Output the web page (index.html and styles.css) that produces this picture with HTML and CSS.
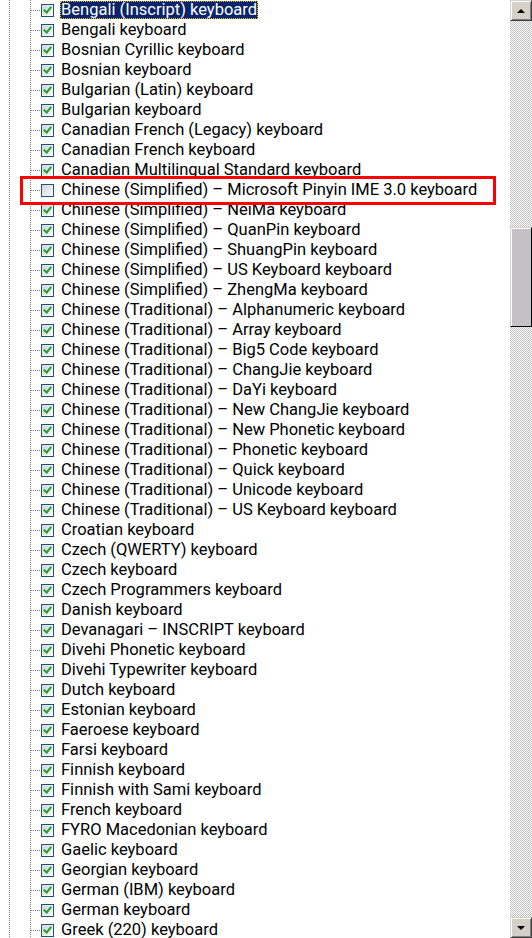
FILE: index.html
```html
<!DOCTYPE html>
<html>
<head>
<meta charset="utf-8">
<link rel="stylesheet" href="styles.css">
</head>
<body>
<div class="window">
  <div class="tree">
    <ul class="list">
      <li class="row"><span class="conn"></span><span class="cb on"></span><span class="label sel">Bengali (Inscript) keyboard</span></li>
      <li class="row"><span class="conn"></span><span class="cb on"></span><span class="label">Bengali keyboard</span></li>
      <li class="row"><span class="conn"></span><span class="cb on"></span><span class="label">Bosnian Cyrillic keyboard</span></li>
      <li class="row"><span class="conn"></span><span class="cb on"></span><span class="label">Bosnian keyboard</span></li>
      <li class="row"><span class="conn"></span><span class="cb on"></span><span class="label">Bulgarian (Latin) keyboard</span></li>
      <li class="row"><span class="conn"></span><span class="cb on"></span><span class="label">Bulgarian keyboard</span></li>
      <li class="row"><span class="conn"></span><span class="cb on"></span><span class="label">Canadian French (Legacy) keyboard</span></li>
      <li class="row"><span class="conn"></span><span class="cb on"></span><span class="label">Canadian French keyboard</span></li>
      <li class="row"><span class="conn"></span><span class="cb on"></span><span class="label">Canadian Multilingual Standard keyboard</span></li>
      <li class="row"><span class="conn"></span><span class="cb"></span><span class="label">Chinese (Simplified) – Microsoft Pinyin IME 3.0 keyboard</span></li>
      <li class="row"><span class="conn"></span><span class="cb on"></span><span class="label">Chinese (Simplified) – NeiMa keyboard</span></li>
      <li class="row"><span class="conn"></span><span class="cb on"></span><span class="label">Chinese (Simplified) – QuanPin keyboard</span></li>
      <li class="row"><span class="conn"></span><span class="cb on"></span><span class="label">Chinese (Simplified) – ShuangPin keyboard</span></li>
      <li class="row"><span class="conn"></span><span class="cb on"></span><span class="label">Chinese (Simplified) – US Keyboard keyboard</span></li>
      <li class="row"><span class="conn"></span><span class="cb on"></span><span class="label">Chinese (Simplified) – ZhengMa keyboard</span></li>
      <li class="row"><span class="conn"></span><span class="cb on"></span><span class="label">Chinese (Traditional) – Alphanumeric keyboard</span></li>
      <li class="row"><span class="conn"></span><span class="cb on"></span><span class="label">Chinese (Traditional) – Array keyboard</span></li>
      <li class="row"><span class="conn"></span><span class="cb on"></span><span class="label">Chinese (Traditional) – Big5 Code keyboard</span></li>
      <li class="row"><span class="conn"></span><span class="cb on"></span><span class="label">Chinese (Traditional) – ChangJie keyboard</span></li>
      <li class="row"><span class="conn"></span><span class="cb on"></span><span class="label">Chinese (Traditional) – DaYi keyboard</span></li>
      <li class="row"><span class="conn"></span><span class="cb on"></span><span class="label">Chinese (Traditional) – New ChangJie keyboard</span></li>
      <li class="row"><span class="conn"></span><span class="cb on"></span><span class="label">Chinese (Traditional) – New Phonetic keyboard</span></li>
      <li class="row"><span class="conn"></span><span class="cb on"></span><span class="label">Chinese (Traditional) – Phonetic keyboard</span></li>
      <li class="row"><span class="conn"></span><span class="cb on"></span><span class="label">Chinese (Traditional) – Quick keyboard</span></li>
      <li class="row"><span class="conn"></span><span class="cb on"></span><span class="label">Chinese (Traditional) – Unicode keyboard</span></li>
      <li class="row"><span class="conn"></span><span class="cb on"></span><span class="label">Chinese (Traditional) – US Keyboard keyboard</span></li>
      <li class="row"><span class="conn"></span><span class="cb on"></span><span class="label">Croatian keyboard</span></li>
      <li class="row"><span class="conn"></span><span class="cb on"></span><span class="label">Czech (QWERTY) keyboard</span></li>
      <li class="row"><span class="conn"></span><span class="cb on"></span><span class="label">Czech keyboard</span></li>
      <li class="row"><span class="conn"></span><span class="cb on"></span><span class="label">Czech Programmers keyboard</span></li>
      <li class="row"><span class="conn"></span><span class="cb on"></span><span class="label">Danish keyboard</span></li>
      <li class="row"><span class="conn"></span><span class="cb on"></span><span class="label">Devanagari – INSCRIPT keyboard</span></li>
      <li class="row"><span class="conn"></span><span class="cb on"></span><span class="label">Divehi Phonetic keyboard</span></li>
      <li class="row"><span class="conn"></span><span class="cb on"></span><span class="label">Divehi Typewriter keyboard</span></li>
      <li class="row"><span class="conn"></span><span class="cb on"></span><span class="label">Dutch keyboard</span></li>
      <li class="row"><span class="conn"></span><span class="cb on"></span><span class="label">Estonian keyboard</span></li>
      <li class="row"><span class="conn"></span><span class="cb on"></span><span class="label">Faeroese keyboard</span></li>
      <li class="row"><span class="conn"></span><span class="cb on"></span><span class="label">Farsi keyboard</span></li>
      <li class="row"><span class="conn"></span><span class="cb on"></span><span class="label">Finnish keyboard</span></li>
      <li class="row"><span class="conn"></span><span class="cb on"></span><span class="label">Finnish with Sami keyboard</span></li>
      <li class="row"><span class="conn"></span><span class="cb on"></span><span class="label">French keyboard</span></li>
      <li class="row"><span class="conn"></span><span class="cb on"></span><span class="label">FYRO Macedonian keyboard</span></li>
      <li class="row"><span class="conn"></span><span class="cb on"></span><span class="label">Gaelic keyboard</span></li>
      <li class="row"><span class="conn"></span><span class="cb on"></span><span class="label">Georgian keyboard</span></li>
      <li class="row"><span class="conn"></span><span class="cb on"></span><span class="label">German (IBM) keyboard</span></li>
      <li class="row"><span class="conn"></span><span class="cb on"></span><span class="label">German keyboard</span></li>
      <li class="row"><span class="conn"></span><span class="cb on"></span><span class="label">Greek (220) keyboard</span></li>
    </ul>
    <div class="highlight-box"></div>
  </div>
  <div class="scrollbar">
    <div class="sbtn"><span class="arrow up"></span></div>
    <div class="track track-top"></div>
    <div class="thumb"></div>
    <div class="track track-bottom"></div>
    <div class="sbtn"><span class="arrow down"></span></div>
  </div>
</div>
</body>
</html>
```

FILE: styles.css
```css
html, body {
  margin: 0;
  padding: 0;
  background: #fff;
}

.window {
  display: flex;
  width: 532px;
  height: 938px;
  overflow: hidden;
}

.tree {
  position: relative;
  flex: 1;
  height: 938px;
  overflow: hidden;
  background-image:
    repeating-linear-gradient(to bottom, #808080 0 1px, transparent 1px 2px),
    repeating-linear-gradient(to bottom, #808080 0 1px, transparent 1px 2px);
  background-size: 1px 100%, 1px 100%;
  background-position: 9px 0, 30px 0;
  background-repeat: no-repeat;
}

.list {
  list-style: none;
  margin: 0;
  padding: 0;
}

.row {
  display: flex;
  align-items: center;
  height: 20px;
  padding-left: 31px;
  font-family: "Roboto", "Liberation Sans", sans-serif;
  font-size: 16.5px;
  color: #000;
  white-space: nowrap;
}

.conn {
  width: 10px;
  height: 1px;
  background-image: repeating-linear-gradient(to right, #808080 0 1px, transparent 1px 2px);
  flex: none;
}

.cb {
  position: relative;
  flex: none;
  box-sizing: border-box;
  width: 13px;
  height: 13px;
  border: 1px solid #1c5180;
  background: linear-gradient(135deg, #dcdcd7 0%, #f4f4f0 70%, #fff 100%);
  margin-right: 6px;
}

.cb::before {
  content: "";
  position: absolute;
  left: 1px;
  top: 1px;
  right: 1px;
  bottom: 1px;
  background: linear-gradient(135deg, #d0d7e0 0%, #eef1f5 80%, #fff 100%);
}

.cb.on::after {
  content: "";
  position: absolute;
  left: 3px;
  top: 0px;
  width: 3px;
  height: 6px;
  border-right: 2px solid #21a121;
  border-bottom: 2px solid #21a121;
  transform: rotate(40deg);
}

.label {
  display: inline-block;
  line-height: 18px;
  padding: 0 1px;
}

.label.sel {
  background: #0a246a;
  color: #fff;
  outline: 1px dotted #f0c000;
  outline-offset: -1px;
}

.highlight-box {
  position: absolute;
  left: 20px;
  top: 176px;
  width: 476px;
  height: 29px;
  box-sizing: border-box;
  border: 3px solid #ff0000;
}

.scrollbar {
  flex: none;
  width: 22px;
  height: 938px;
  display: flex;
  flex-direction: column;
}

.sbtn {
  flex: none;
  box-sizing: border-box;
  height: 21px;
  background: #d4d0c8;
  border-top: 1px solid #d4d0c8;
  border-left: 1px solid #d4d0c8;
  border-right: 1px solid #404040;
  border-bottom: 1px solid #404040;
  box-shadow: inset 1px 1px 0 #fff, inset -1px -1px 0 #808080;
  display: flex;
  align-items: center;
  justify-content: center;
}

.arrow {
  width: 0;
  height: 0;
  border-left: 4px solid transparent;
  border-right: 4px solid transparent;
}

.arrow.up {
  border-bottom: 4px solid #000;
}

.arrow.down {
  border-top: 4px solid #000;
}

.track {
  background-color: #fff;
  background-image: repeating-conic-gradient(#c0c0c0 0 25%, #fff 0 50%);
  background-size: 2px 2px;
}

.track-top {
  height: 206px;
}

.thumb {
  flex: none;
  box-sizing: border-box;
  height: 100px;
  background: #c3c1c3;
  border-top: 1px solid #d4d0c8;
  border-left: 1px solid #d4d0c8;
  border-right: 1px solid #000;
  border-bottom: 1px solid #000;
  box-shadow: inset 1px 1px 0 #fff, inset -1px -1px 0 #c3c1c3;
}

.track-bottom {
  flex: 1;
}
```
